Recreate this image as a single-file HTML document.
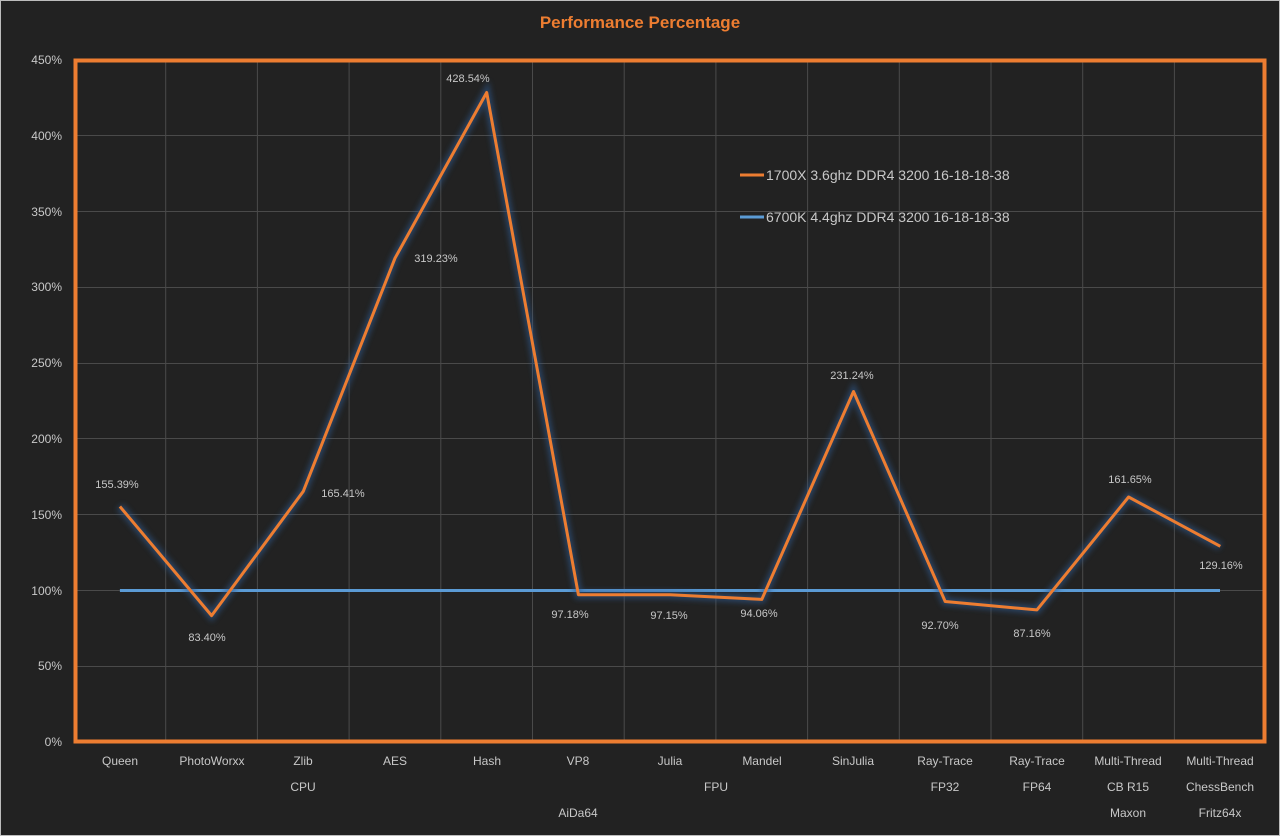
<!DOCTYPE html>
<html><head><meta charset="utf-8"><style>
html,body{margin:0;padding:0;background:#222;}
svg{display:block;font-family:"Liberation Sans",sans-serif;}
</style></head><body>
<svg width="1280" height="836" viewBox="0 0 1280 836" xmlns="http://www.w3.org/2000/svg">
<defs>
<filter id="gb" x="-10%" y="-10%" width="120%" height="120%"><feGaussianBlur stdDeviation="3"/></filter>
</defs>
<rect x="0.5" y="0.5" width="1279" height="835" fill="#222" stroke="#bdbdbd"/>
<text x="640" y="28" text-anchor="middle" fill="#ed7d31" font-size="17" font-weight="bold">Performance Percentage</text>
<g stroke="#4a4a4a" stroke-width="1">
<line x1="74" y1="135.5" x2="1266" y2="135.5"/><line x1="74" y1="211.5" x2="1266" y2="211.5"/>
<line x1="74" y1="287.5" x2="1266" y2="287.5"/><line x1="74" y1="363.5" x2="1266" y2="363.5"/>
<line x1="74" y1="438.5" x2="1266" y2="438.5"/><line x1="74" y1="514.5" x2="1266" y2="514.5"/>
<line x1="74" y1="590.5" x2="1266" y2="590.5"/><line x1="74" y1="666.5" x2="1266" y2="666.5"/>
<line x1="165.7" y1="60" x2="165.7" y2="742"/><line x1="257.4" y1="60" x2="257.4" y2="742"/>
<line x1="349.1" y1="60" x2="349.1" y2="742"/><line x1="440.8" y1="60" x2="440.8" y2="742"/>
<line x1="532.5" y1="60" x2="532.5" y2="742"/><line x1="624.2" y1="60" x2="624.2" y2="742"/>
<line x1="715.9" y1="60" x2="715.9" y2="742"/><line x1="807.6" y1="60" x2="807.6" y2="742"/>
<line x1="899.3" y1="60" x2="899.3" y2="742"/><line x1="991" y1="60" x2="991" y2="742"/>
<line x1="1082.7" y1="60" x2="1082.7" y2="742"/><line x1="1174.4" y1="60" x2="1174.4" y2="742"/>
</g>
<rect x="75.5" y="60.5" width="1189" height="681" fill="none" stroke="#ed7d31" stroke-width="4"/>
<g fill="#c8c8c8" font-size="12" text-anchor="end">
<text x="62" y="64">450%</text><text x="62" y="140">400%</text><text x="62" y="216">350%</text>
<text x="62" y="291">300%</text><text x="62" y="367">250%</text><text x="62" y="443">200%</text>
<text x="62" y="519">150%</text><text x="62" y="595">100%</text><text x="62" y="670">50%</text>
<text x="62" y="746">0%</text>
</g>
<line x1="119.9" y1="590.5" x2="1220" y2="590.5" stroke="#ed7d31" stroke-width="7" opacity="0.5" filter="url(#gb)"/>
<line x1="119.9" y1="590.5" x2="1220" y2="590.5" stroke="#5b9bd5" stroke-width="3"/>
<polyline fill="none" stroke="#2e5a90" stroke-width="8" opacity="0.6" filter="url(#gb)" points="119.9,506.5 211.6,615.6 303.3,491.3 395,258.2 486.7,92.5 578.4,594.7 670.1,594.8 761.8,599.4 853.5,391.5 945.2,601.5 1036.9,609.9 1128.6,497 1220.3,546.3"/>
<polyline fill="none" stroke="#ed7d31" stroke-width="3" stroke-linejoin="round" points="119.9,506.5 211.6,615.6 303.3,491.3 395,258.2 486.7,92.5 578.4,594.7 670.1,594.8 761.8,599.4 853.5,391.5 945.2,601.5 1036.9,609.9 1128.6,497 1220.3,546.3"/>
<g fill="#c8c8c8" font-size="11" text-anchor="middle">
<text x="117" y="488">155.39%</text><text x="207" y="641">83.40%</text><text x="343" y="497">165.41%</text>
<text x="436" y="262">319.23%</text><text x="468" y="82">428.54%</text><text x="570" y="618">97.18%</text>
<text x="669" y="619">97.15%</text><text x="759" y="617">94.06%</text><text x="852" y="379">231.24%</text>
<text x="940" y="629">92.70%</text><text x="1032" y="637">87.16%</text><text x="1130" y="483">161.65%</text>
<text x="1221" y="569">129.16%</text>
</g>
<g fill="#c8c8c8" font-size="12" text-anchor="middle">
<text x="120" y="765">Queen</text><text x="212" y="765">PhotoWorxx</text><text x="303" y="765">Zlib</text>
<text x="395" y="765">AES</text><text x="487" y="765">Hash</text><text x="578" y="765">VP8</text>
<text x="670" y="765">Julia</text><text x="762" y="765">Mandel</text><text x="853" y="765">SinJulia</text>
<text x="945" y="765">Ray-Trace</text><text x="1037" y="765">Ray-Trace</text><text x="1128" y="765">Multi-Thread</text>
<text x="1220" y="765">Multi-Thread</text>
<text x="303" y="791">CPU</text><text x="716" y="791">FPU</text><text x="945" y="791">FP32</text>
<text x="1037" y="791">FP64</text><text x="1128" y="791">CB R15</text><text x="1220" y="791">ChessBench</text>
<text x="578" y="817">AiDa64</text><text x="1128" y="817">Maxon</text><text x="1220" y="817">Fritz64x</text>
</g>
<line x1="740" y1="175" x2="764" y2="175" stroke="#ed7d31" stroke-width="3"/>
<line x1="740" y1="217" x2="764" y2="217" stroke="#5b9bd5" stroke-width="3"/>
<g fill="#c8c8c8" font-size="14">
<text x="766" y="180">1700X 3.6ghz DDR4 3200 16-18-18-38</text>
<text x="766" y="222">6700K 4.4ghz DDR4 3200 16-18-18-38</text>
</g>
</svg>
</body></html>
